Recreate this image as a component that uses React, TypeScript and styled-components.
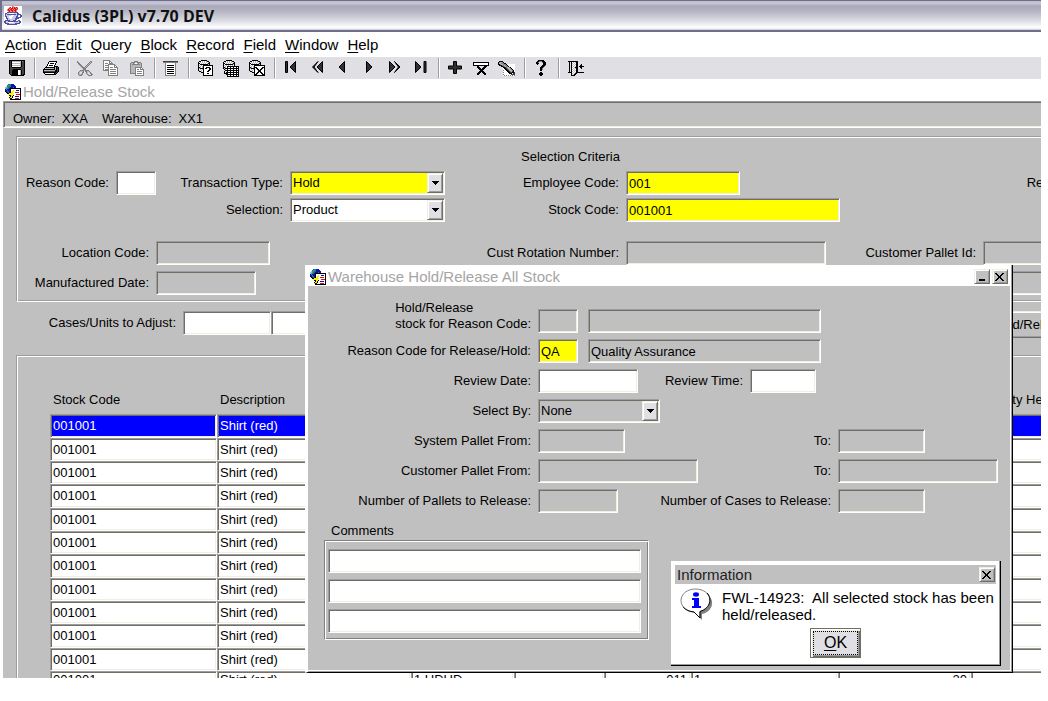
import React from 'react';
import styled, { createGlobalStyle, css } from 'styled-components';

const GREY = '#c0c0c0';
const SHADE = '#9d9da1';
const DARK = '#716f64';
const CREAM = '#f1efe2';
const CHROME = '#dfdfe4';

const inset = css`
  border: 1px solid;
  border-color: ${SHADE} #fff #fff ${SHADE};
  box-shadow: inset 1px 1px ${DARK}, inset -1px -1px ${CREAM};
`;

const raised = css`
  border: 1px solid;
  border-color: ${CREAM} ${DARK} ${DARK} ${CREAM};
  box-shadow: inset 1px 1px #fff, inset -1px -1px ${SHADE};
`;

const GlobalStyle = createGlobalStyle`
  *, *::before, *::after { box-sizing: border-box; }
  body {
    margin: 0;
    background: #fff;
    color: #000;
    font: 13px/16px "Liberation Sans", Arial, sans-serif;
    overflow: hidden;
  }
  button, input, select { font: inherit; color: inherit; margin: 0; border-radius: 0; }
`;

/* ---------- window chrome ---------- */

const Frame = styled.div`
  position: relative;
  display: flex;
  flex-direction: column;
  height: calc(100vh - 23px);
  margin-right: 7px;
  overflow: hidden;
`;

const TitleBar = styled.header`
  flex: none;
  display: flex;
  align-items: center;
  gap: 10px;
  height: 32px;
  padding-left: 2px;
  border: solid #6f6e8c;
  border-width: 1px 0 2px 2px;
  background: linear-gradient(#b9b9d0 0, #c9c9d6 2px, #a9a9ba 5px, #b4b4c2 10px, #dcdce4 20px, #f8f8fa 25px, #ffffff 27px, #c8c8d6 29px);
`;

const AppTitle = styled.h1`
  margin: 0;
  font: bold 16px/20px "Open Sans", "Noto Sans", sans-serif;
  color: #111;
`;

const MenuBar = styled.nav`
  flex: none;
  display: flex;
  gap: 9px;
  height: 25px;
  padding-left: 5px;
`;

const MenuItem = styled.button`
  border: 0;
  padding: 0;
  background: none;
  font-size: 15px;
  line-height: 25px;
  &::first-letter {
    text-decoration: underline;
    text-underline-offset: 2px;
  }
`;

const Toolbar = styled.div`
  flex: none;
  display: flex;
  align-items: center;
  height: 22px;
  padding-left: 4px;
  background: ${CHROME};
`;

const ToolButton = styled.button`
  display: flex;
  align-items: center;
  justify-content: center;
  width: 26px;
  height: 22px;
  border: 0;
  padding: 0;
  background: none;
`;

const Separator = styled.span`
  width: 2px;
  height: 20px;
  margin: 0 2px 0 4px;
  border-left: 1px solid ${SHADE};
  border-right: 1px solid #fff;
`;

const WindowTitle = styled.div`
  flex: none;
  display: flex;
  align-items: center;
  gap: 2px;
  height: 22px;
  padding: 3px 4px 0 5px;
  background: #fff;
  color: #a5a5a5;
  font-size: 15px;
`;

const TitleText = styled.h2`
  flex: 1;
  margin: 0;
  font-size: inherit;
  font-weight: normal;
`;

const CaptionButton = styled.button`
  ${raised}
  display: flex;
  align-items: center;
  justify-content: center;
  width: 16px;
  height: 15px;
  padding: 0;
  background: ${GREY};
`;

/* ---------- form parts ---------- */

const Workspace = styled.main`
  flex: 1 0 auto;
  margin-left: 3px;
  background: ${GREY};
`;

const InfoStrip = styled.div`
  display: flex;
  gap: 14px;
  height: 27px;
  padding: 9px 0 0 9px;
  border: solid;
  border-width: 1px 0 1px 1px;
  border-color: ${SHADE} #fff #fff ${SHADE};
  box-shadow: inset 1px 1px ${DARK}, inset 0 -1px ${CREAM};
`;

const InfoPair = styled.span`
  display: flex;
  gap: 7px;
  line-height: 15px;
`;

const Panel = styled.section`
  margin: 8px -20px 0 13px;
  border: 1px solid ${SHADE};
  border-bottom-color: #fff;
  box-shadow: inset 1px 1px #fff, inset 0 -1px ${SHADE};
`;

const CriteriaPanel = styled(Panel)`
  padding: 12px 0 6px 1px;
`;

const StockPanel = styled(Panel)`
  margin-top: 17px;
  padding: 35px 0 0 33px;
`;

const PanelHeading = styled.h3`
  margin: 0 0 6px;
  padding-left: 503px;
  font-size: 13px;
  font-weight: normal;
`;

const Line = styled.div<{ $after?: number }>`
  display: flex;
  align-items: center;
  gap: 7px;
  height: 24px;
  margin-bottom: ${p => p.$after ?? 0}px;
`;

const Label = styled.label<{ $w?: number }>`
  flex: none;
  width: ${p => (p.$w ? p.$w + 'px' : 'auto')};
  text-align: right;
  white-space: nowrap;
`;

const Spacer = styled.span<{ $w: number }>`
  flex: none;
  width: ${p => p.$w}px;
`;

type Tone = 'white' | 'grey' | 'yellow';
const toneColor = { white: '#fff', grey: GREY, yellow: '#ff0' };

const Field = styled.input<{ $w: number; $tone?: Tone }>`
  ${inset}
  flex: none;
  width: ${p => p.$w}px;
  height: 24px;
  padding: 0 2px;
  background: ${p => toneColor[p.$tone ?? 'white']};
  outline: 0;
`;

const SelectBox = styled.span<{ $w: number; $tone?: Tone }>`
  ${inset}
  position: relative;
  flex: none;
  display: flex;
  width: ${p => p.$w}px;
  height: 24px;
  background: ${p => toneColor[p.$tone ?? 'white']};
`;

const NativeSelect = styled.select`
  appearance: none;
  flex: 1;
  border: 0;
  padding: 0 18px 0 2px;
  background: none;
  outline: 0;
`;

const Arrow = styled.span`
  ${raised}
  position: absolute;
  top: 1px;
  right: 1px;
  bottom: 1px;
  display: flex;
  align-items: center;
  justify-content: center;
  width: 16px;
  background: ${CHROME};
  pointer-events: none;
`;

function Select({ id, w, value, tone }: { id: string; w: number; value: string; tone?: Tone }) {
  return (
    <SelectBox $w={w} $tone={tone}>
      <NativeSelect id={id} defaultValue={value}>
        <option>{value}</option>
      </NativeSelect>
      <Arrow>
        <svg width="7" height="4" shapeRendering="crispEdges">
          <path d="M0 0h7v1h-1v1h-1v1h-1v1h-1v-1h-1v-1h-1v-1h-1z" />
        </svg>
      </Arrow>
    </SelectBox>
  );
}

const AdjustLine = styled(Line)`
  height: 27px;
  align-items: flex-start;
  margin-top: 9px;
  line-height: 24px;
`;

const FieldPair = styled.span`
  display: flex;
`;

const ActionButton = styled.button`
  ${raised}
  flex: none;
  width: 98px;
  height: 27px;
  margin-left: 617px;
  padding: 0;
  background: ${GREY};
`;

/* ---------- stock table ---------- */

const StockTable = styled.table`
  table-layout: fixed;
  width: 1060px;
  border-collapse: separate;
  border-spacing: 0;
`;

const Head = styled.th`
  height: 23px;
  padding: 0 0 5px 3px;
  font-weight: normal;
  text-align: left;
  white-space: nowrap;
`;

const Cell = styled.td<{ $right?: boolean }>`
  ${inset}
  height: 23px;
  padding: 0 3px 0 2px;
  background: #fff;
  text-align: ${p => (p.$right ? 'right' : 'left')};
  white-space: nowrap;
`;

const StockRow = styled.tr<{ $selected?: boolean }>`
  &:nth-child(3n + 1) ${Cell} {
    height: 24px;
  }
  &:last-child ${Cell} {
    vertical-align: top;
  }
  ${p =>
    p.$selected &&
    css`
      ${Cell} {
        background: #00f;
        color: #fff;
      }
    `}
`;

/* ---------- dialogs ---------- */

const ReleaseDialog = styled.section`
  position: absolute;
  left: 305px;
  top: 265px;
  display: flex;
  flex-direction: column;
  width: 708px;
  height: 408px;
  border: solid;
  border-width: 0 1px 1px 3px;
  border-color: #fff #000 #000 #fff;
  background: ${GREY};
  box-shadow: inset -1px -1px ${SHADE}, inset -2px -2px #fff;
`;

const DialogTitle = styled(WindowTitle)`
  height: 21px;
  padding: 2px 3px 0 2px;
  margin-right: 1px;
`;

const DialogForm = styled.form`
  display: flex;
  flex-direction: column;
  gap: 6px;
  padding-top: 23px;
`;

const StackedLabel = styled(Label)`
  display: flex;
  justify-content: flex-end;
  margin-top: -10px;
  text-align: left;
`;

const FieldRun = styled.span<{ $w: number }>`
  flex: none;
  display: flex;
  align-items: center;
  justify-content: space-between;
  width: ${p => p.$w}px;
`;

const Comments = styled.fieldset`
  width: 325px;
  margin: 10px 0 0 16px;
  padding: 0;
  border: 0;
`;

const CommentsLegend = styled.legend`
  padding: 0 0 1px 7px;
`;

const CommentsFrame = styled.div`
  display: flex;
  flex-direction: column;
  gap: 6px;
  height: 100px;
  padding: 8px 0 0 3px;
  border: 1px solid;
  border-color: #808080 #fff #fff #808080;
  box-shadow: inset 1px 1px #fff, inset -1px -1px #808080;
`;

const InfoDialog = styled.section`
  position: absolute;
  left: 671px;
  top: 561px;
  width: 330px;
  height: 105px;
  padding: 4px 4px 0 4px;
  border-right: 1px solid #000;
  border-bottom: 1px solid #000;
  background: #fff;
  box-shadow: inset -1px -1px ${SHADE};
`;

const InfoTitle = styled.div`
  display: flex;
  align-items: center;
  height: 19px;
  padding: 0 1px 0 2px;
  background: ${GREY};
  font-size: 15px;
  color: #222;
`;

const InfoBody = styled.div`
  display: flex;
  gap: 9px;
  padding: 4px 0 0 5px;
`;

const Message = styled.p`
  margin: 1px 0 0;
  font-size: 15px;
  line-height: 17px;
  white-space: pre;
`;

const OkButton = styled.button`
  display: block;
  width: 51px;
  height: 30px;
  margin: 5px auto 0;
  padding: 1px;
  border: 1px solid ${DARK};
  background: ${CHROME};
  box-shadow: inset 1px 1px #fff, inset 2px 2px ${CREAM}, inset -1px -1px ${DARK}, inset -2px -2px ${SHADE};
`;

const OkFace = styled.span`
  display: block;
  margin: 1px;
  border: 1px dotted #000;
  font-size: 16px;
  line-height: 22px;
  &::first-letter {
    text-decoration: underline;
    text-underline-offset: 2px;
  }
`;

/* ---------- icons ---------- */

const INK: Record<string, string> = {
  K: '#000000',
  D: '#404040',
  M: '#808080',
  L: '#b8b8b8',
  W: '#ffffff',
  R: '#e01010',
  B: '#1010b0',
  C: '#3090c0',
  G: '#108050',
  Y: '#f8f000',
  P: '#f08080',
  V: '#5050a0',
  S: '#c8c8e8',
};

function Pixels({ rows }: { rows: string[] }) {
  const used = Math.max(...rows.map(r => r.replace(/\.+$/, '').length));
  const w = used + (used % 2);
  const runs: React.ReactElement[] = [];
  rows.forEach((row, y) => {
    for (const m of row.matchAll(/([A-Z])\1*/g)) {
      runs.push(<rect key={`${m.index}-${y}`} x={m.index} y={y} width={m[0].length} height={1} fill={INK[m[1]]} />);
    }
  });
  return (
    <svg width={w} height={rows.length} shapeRendering="crispEdges" aria-hidden="true">
      {runs}
    </svg>
  );
}

const javaCup = [
  'WWWWWWWWPPWWWWWWWW',
  'WWWWWPRWRPRPRPWWWW',
  'WWWWPRPRRPRRPRWWWW',
  'WWWPRPRRPRPRRPWWWW',
  'WWWPRRPRRPRRPWWWWW',
  'WWWWPRPPRPPRPWWWWW',
  'WWWVVVVVVVVVVVWWWW',
  'WVVSSWWWWWSSSVVWWW',
  'WVSVVVVVVVVVSVVVVW',
  'WVSSSSSWWWSSSVSWVV',
  'WVVSSWWWWSSSVVWWVV',
  'WWVSSWWWSSSSVVVVVW',
  'WWVVSSWWSSSVVVVWWW',
  'WWWVSSSSSSSVVWWWWW',
  'WVVVVVSSSVVVWWVVWW',
  'VVSSVVVVVVVVVVSVVW',
  'VVSSWWWWWWSSSSSVVW',
  'WVVVVSSSSSSVVVVVWW',
  'WWWVVVVVVVVVVWWWWW',
  'WWWWWWWWWWWWWWWWWW',
];

const docIcon = [
  '...GGCBBB.......',
  '..GCCGBBBB......',
  '.LCCGGBBBBB.....',
  'LLCGGBBBGBB.....',
  'LCCGBKKKKKKKKKKK',
  'BCBBBKWWWWWWWWWK',
  'BBGBBKWWYWWBBBWK',
  'KBGGBKWYYWWWWWWK',
  '.KBGBKYYWWRRRRWK',
  '..KKYYYYYWWWWWWK',
  '...YYYYYWWWRRRRK',
  '....KKYYKWWWWWWK',
  '.....KYKWWBBBBWK',
  '....KYYKWWWWWWWK',
  '....YKKWWWRRRRWK',
  '.....KKKKKKKKKKK',
];

const save = [
  'KKKKKKKKKKKKKKKK',
  'KDKLLLLLLLLLKMDK',
  'KDKWWWWWWWWLKDDK',
  'KDKLLLLLLLLLKDDK',
  'KDKWWWWWWWWLKDDK',
  'KDKLLLLLLLLLKDDK',
  'KDKWWWWWWWWLKDDK',
  'KDDKKKKKKKKKDDDK',
  'KDDDDDDDDDDDDDDK',
  'KDDDKKKKKKKKDDDK',
  'KDDKKKKKKWWLKDDK',
  'KDDKKKKKKWWLKDDK',
  'KDDKKKKKKWWLKDDK',
  'KDDKKKKKKWWLKDDK',
  '.KDKKKKKKWWLKDKK',
  '..KKKKKKKKKKKKK.',
];

const print = [
  '......KKKKKKKK..',
  '.....KWWWWWWWK..',
  '.....KWKKKKWK...',
  '....KWWWWWWWK...',
  '....KWKKKKWK....',
  '...KWWWWWWWKKKK.',
  '..KKKKKKKKKKLKDK',
  '.KLLLLLLLLLKLKDK',
  'KKKKKKKKKKKKLKDK',
  'KLLLLLLLLLLLKKDK',
  'KDDDDDDDDDDDKKDK',
  'KKKKKKKKKKKKKDK.',
  '.KWWWWWWWWWKDK..',
  '..KKKKKKKKKKK...',
];

const cut = [
  'M............MM.',
  'MM..........MLM.',
  '.MM........MLM..',
  '.LMM......MLM...',
  '..LMM....MLM....',
  '...LMM..MLM.....',
  '....LMMMLM......',
  '.....LMMM.......',
  '......MMM.......',
  '...MMMMLMMMM....',
  '..MLLLM.MMLLM...',
  '.ML..MM..ML.LM..',
  '.ML..M...ML..MM.',
  '.MLLMM....ML..MM',
  '..MMM......MMMM.',
];

const copy = [
  'MMMMMMM.........',
  'MWWWWWMM........',
  'MWWWWWMWM.......',
  'MWMMMWMMMM......',
  'MWWWWMMMMMMM....',
  'MWMMMMWWWWWMM...',
  'MWWWWMWWWWWMWM..',
  'MWMMMMWMMMWMMMM.',
  'MWWWWMWWWWWWWWM.',
  'MWMMMMWMMMMMMWM.',
  'MMMMMMWWWWWWWWM.',
  '.....MWMMMMMMWM.',
  '.....MWWWWWWWWM.',
  '.....MWMMMMMMWM.',
  '.....MWWWWWWWWM.',
  '.....MMMMMMMMMM.',
];

const paste = [
  '.....MMMM.......',
  '..MMMMLLMMMM....',
  '.MLLMLWWLMLLM...',
  '.MLMMMMMMMMLM...',
  '.MLLLLLLLLLLM...',
  '.MLLLLLLLLLLM...',
  '.MLLLLMMMMMMM...',
  '.MLLLLMWWWWMWM..',
  '.MLLLLMWMMWMMMM.',
  '.MLLLLMWWWWWWWM.',
  '.MLLLLMWMMMMMWM.',
  '.MLLLLMWWWWWWWM.',
  '.MMMMMMWMMMMMWM.',
  '......MWWWWWWWM.',
  '......MMMMMMMMM.',
];

const form = [
  'DDDDDDDDDDDDDDD',
  'MMMMMMMMMMMMMMM',
  '..MWWWWWWWWWM..',
  '..MWWWWWWWWWM..',
  '..MWKKKKKKKWM..',
  '..MWWWWWWWWWM..',
  '..MWKKKKKKKWM..',
  '..MWWWWWWWWWM..',
  '..MWKKKKKKKWM..',
  '..MWWWWWWWWWM..',
  '..MWKKKKKKKWM..',
  '..MWWWWWWWWWM..',
  '..MWKKKKKKKWM..',
  '..MWWWWWWWWWM..',
  '..MMMMMMMMMMM..',
];

const enterQuery = [
  '....KKKKKK.......',
  '..KKWLWLWLKK.....',
  '.KWLWLWLWLWLK....',
  '.KKWLWLWLWLKK....',
  '.KWKKKKKKKKLK....',
  '.KLWLWKKKKKKKKKK.',
  '.KWLWLKWWWWWWWWK.',
  '.KKLWLKWWKKKKWWK.',
  '.KLKKKKWKKWWKKWK.',
  '.KWLWLKWWWWWKKWK.',
  '.KLWLWKWWWWKKWWK.',
  '..KKLWKWWWKKWWWK.',
  '....KKKWWWWWWWWK.',
  '......KWWWKKWWWK.',
  '......KWWWWWWWWK.',
  '......KKKKKKKKKK.',
];

const runQuery = [
  '....KKKKKK.......',
  '..KKWLWLWLKK.....',
  '.KWLWLWLWLWLK....',
  '.KKWLWLWLWLKK....',
  '.KWKKKKKKKKLK....',
  '.KLWLWLWLWLWK....',
  '.KWLWKKKKKKKKKKKK',
  '.KKLWKWWKWWKWWKWK',
  '.KLKKKKKKKKKKKKKK',
  '..KLWKWWKWWKWWKWK',
  '...KKKKKKKKKKKKKK',
  '..K..KWWKWWKWWKWK',
  '..K.KKKKKKKKKKKKK',
  '..KKKKWWKWWKWWKWK',
  '....KKKKKKKKKKKKK',
  '.....KWWKWWKWWKWK',
  '.....KKKKKKKKKKKK',
];

const cancelQuery = [
  '....KKKKKK.......',
  '..KKWLWLWLKK.....',
  '.KWLWLWLWLWLK....',
  '.KKWLWLWLWLKK....',
  '.KWKKKKKKKKLK....',
  '.KLWLWKKKKKKKKKKK',
  '.KWLWLKWWWWWWWWWK',
  '.KKLWLKKKWWWWWKKK',
  '.KLKKKKWKKWWWKKWK',
  '.KWLWLKWWKKWKKWWK',
  '.KLWLWKWWWKKKWWWK',
  '..KKLWKWWWKKKWWWK',
  '....KKKWWKKWKKWWK',
  '......KWKKWWWKKWK',
  '......KKKWWWWWKKK',
  '......KKKKKKKKKKK',
];

const clearRecord = [
  'KKKKKKKKKKKKKKKK',
  'KWWWWWWWWWWWWWWK',
  'KWWWWWWWWWWWWWWK',
  'KKKKKKKKKKKKKKKK',
  '....KK.....KKK..',
  '....KKK...KKK...',
  '.....KKK.KKK....',
  '......KKKKK.....',
  '.......KKK......',
  '......KKKKK.....',
  '.....KKK.KKK....',
  '....KKK...KKK...',
  '....KK.....KK...',
];

const torch = [
  '.KKKK............',
  'KMLLMK...........',
  'KLLMMMKK.........',
  'KKMLLMMMKWWWWWWWW',
  '.KKKMMLMMKWWWWWWW',
  '...KKDMLMMKWWWWWW',
  '.....KKDMLLMKWWWW',
  '.....WKKDMLLMKWWW',
  '.....WWKKDMLLMKWW',
  '.....MWWKKDMLLMKW',
  '.....WWWWKKDMLDKW',
  '.....MWWWWKKDDKKD',
  '.....WWWWWWKKKWDD',
  '.....MWWWWWWWDDDD',
  '.....WMWMWMWMWMWM',
];

const help = [
  '..KKKKKK..',
  '.KKMMMKKK.',
  'KKM...MKKK',
  'KKK....KKK',
  '.K.....KKK',
  '......KKKM',
  '.....KKKM.',
  '....KKKM..',
  '....KKM...',
  '....KKM...',
  '....KK....',
  '..........',
  '....KK....',
  '...KKKK...',
  '...KKKK...',
  '....KK....',
];

const exit = [
  '..KKKKKKKKKK......',
  '...K.KWLWLKK......',
  '...K.KLWLWKK......',
  '...K.KWLWLKK...K..',
  '...K.KLWLWKK..KK..',
  '...K.KWLWLKK.KKKKK',
  '...K.KLWLKKK..KK..',
  '...K.KWLWLKK...K..',
  '...K.KLWLWKK......',
  '...K.KWLWLKK......',
  '...K.KLWLWKK......',
  '..KKKKWLWLKKKKKKKK',
  '.....KLWLKK.......',
  '.....KWLKK........',
  '.....KKKK.........',
];

function Glyph({ w, d }: { w: number; d: string }) {
  return (
    <svg width={w} height="14" viewBox={`0 0 ${w} 14`} aria-hidden="true">
      <path d={d} fill="#303030" stroke="#000" strokeWidth="1" />
    </svg>
  );
}

const tools: ([string, React.ReactElement] | null)[] = [
  ['Save', <Pixels rows={save} />],
  null,
  ['Print', <Pixels rows={print} />],
  null,
  ['Cut', <Pixels rows={cut} />],
  ['Copy', <Pixels rows={copy} />],
  ['Paste', <Pixels rows={paste} />],
  null,
  ['List', <Pixels rows={form} />],
  null,
  ['Enter query', <Pixels rows={enterQuery} />],
  ['Run query', <Pixels rows={runQuery} />],
  ['Cancel query', <Pixels rows={cancelQuery} />],
  null,
  ['First record', <Glyph w={12} d="M.5 .5h2v11h-2z M10.500 .5v11L5 6z" />],
  ['Previous block', <Glyph w={12} d="M11.500 .5v11L6 6z M7 .5L1.500 6 7 11.500 3 6z" />],
  ['Previous record', <Glyph w={12} d="M7.500 .5v11L2 6z" />],
  ['Next record', <Glyph w={8} d="M1.500 .5v11L7 6z" />],
  ['Next block', <Glyph w={12} d="M.5 .5v11L6 6z M5.500 .5L11 6 5.500 11.500 9.500 6z" />],
  ['Last record', <Glyph w={12} d="M.5 .5v11L6 6z M9 .5h2v11h-2z" />],
  null,
  ['Insert record', <Glyph w={14} d="M5.500.5h3v4.500h5v3h-5v4.500h-3v-4.500h-5v-3h5z" />],
  ['Remove record', <Pixels rows={clearRecord} />],
  ['Clear record', <Pixels rows={torch} />],
  null,
  ['Help', <Pixels rows={help} />],
  null,
  ['Exit', <Pixels rows={exit} />],
];

const CloseGlyph = () => (
  <Pixels
    rows={[
      'KK.....KK.',
      '.KK...KK..',
      '..KK.KK...',
      '...KKK....',
      '...KKK....',
      '..KK.KK...',
      '.KK...KK..',
      'KK.....KK.',
    ]}
  />
);

const InfoBalloon = () => (
  <svg width="33" height="33" viewBox="0 0 33 33" aria-hidden="true">
    <path d="M30 9c4 5 2 12-3 15-2 1-4 2-5 2v6l-4-4 2-4z" fill="#808080" />
    <path d="M15.500 1C23.500 1 30 5.800 30 12.500c0 5.500-4 9.500-10 11v6.500L14 24C6.500 23.500 1 18.500 1 12.500 1 5.800 7.500 1 15.500 1z" fill="#fff" stroke="#808080" />
    <path d="M27 5c5 5 4 15-7 18.500v6.500L14 24C9.500 23.600 5.500 22 3.200 19" fill="none" stroke="#000" />
    <ellipse cx="16" cy="6.500" rx="3" ry="2.200" fill="#00f" />
    <path d="M12 10h7v8h2v2h-9v-2h2v-6h-2z" fill="#00f" />
  </svg>
);

/* ---------- screens ---------- */

const menus = ['Action', 'Edit', 'Query', 'Block', 'Record', 'Field', 'Window', 'Help'];
const columns = [167, 194, 103, 90, 87, 147, 133, 139];

type Stock = { id: number; tag?: string; batch?: string; level?: string; qty?: string };
const stock: Stock[] = [
  ...Array.from({ length: 11 }, (_, id) => ({ id })),
  { id: 11, tag: '1 UDUD', batch: '011', level: '1', qty: '20' },
];

function SelectionCriteria() {
  return (
    <CriteriaPanel>
      <PanelHeading>Selection Criteria</PanelHeading>
      <Line $after={3}>
        <Label $w={91} htmlFor="reason">Reason Code:</Label>
        <Field id="reason" $w={40} />
        <Label $w={120} htmlFor="txn">Transaction Type:</Label>
        <Select id="txn" w={155} value="Hold" tone="yellow" />
        <Label $w={167} htmlFor="employee">Employee Code:</Label>
        <Field id="employee" $w={114} $tone="yellow" defaultValue="001" />
        <Label $w={357}>Review Date:</Label>
      </Line>
      <Line $after={19}>
        <Label $w={265} htmlFor="selection">Selection:</Label>
        <Select id="selection" w={155} value="Product" />
        <Label $w={167} htmlFor="stock">Stock Code:</Label>
        <Field id="stock" $w={214} $tone="yellow" defaultValue="001001" />
      </Line>
      <Line $after={6}>
        <Label $w={131} htmlFor="location">Location Code:</Label>
        <Field id="location" $w={114} $tone="grey" readOnly />
        <Label $w={342} htmlFor="rotation">Cust Rotation Number:</Label>
        <Field id="rotation" $w={200} $tone="grey" readOnly />
        <Label $w={143} htmlFor="pallet">Customer Pallet Id:</Label>
        <Field id="pallet" $w={114} $tone="grey" readOnly />
      </Line>
      <Line>
        <Label $w={131} htmlFor="made">Manufactured Date:</Label>
        <Field id="made" $w={100} $tone="grey" readOnly />
        <Spacer $w={713} />
        <Field aria-label="Pallet" $w={114} $tone="grey" readOnly />
      </Line>
    </CriteriaPanel>
  );
}

function StockList() {
  return (
    <StockPanel>
      <StockTable>
        <colgroup>
          {columns.map((w, i) => (
            <col key={i} width={w} />
          ))}
        </colgroup>
        <thead>
          <tr>
            <Head>Stock Code</Head>
            <Head>Description</Head>
            <Head colSpan={5} />
            <Head>Quantity Held</Head>
          </tr>
        </thead>
        <tbody>
          {stock.map(s => (
            <StockRow key={s.id} $selected={s.id === 0}>
              <Cell>001001</Cell>
              <Cell>Shirt (red)</Cell>
              <Cell>{s.tag}</Cell>
              <Cell />
              <Cell $right>{s.batch}</Cell>
              <Cell>{s.level}</Cell>
              <Cell $right>{s.qty}</Cell>
              <Cell />
            </StockRow>
          ))}
        </tbody>
      </StockTable>
    </StockPanel>
  );
}

function HoldReleaseDialog() {
  return (
    <ReleaseDialog role="dialog" aria-label="Warehouse Hold/Release All Stock">
      <DialogTitle>
        <Pixels rows={docIcon} />
        <TitleText>Warehouse Hold/Release All Stock</TitleText>
        <CaptionButton aria-label="Minimize">
          <svg width="8" height="8" shapeRendering="crispEdges"><path d="M1 6h6v2h-6z" /></svg>
        </CaptionButton>
        <CaptionButton aria-label="Close"><CloseGlyph /></CaptionButton>
      </DialogTitle>
      <DialogForm onSubmit={e => e.preventDefault()}>
        <Line>
          <StackedLabel $w={223} htmlFor="fromReason">
            <span>Hold/Release<br />stock for Reason Code:</span>
          </StackedLabel>
          <FieldRun $w={283}>
            <Field id="fromReason" $w={40} $tone="grey" readOnly />
            <Field aria-label="From reason description" $w={233} $tone="grey" readOnly />
          </FieldRun>
        </Line>
        <Line>
          <Label $w={223} htmlFor="toReason">Reason Code for Release/Hold:</Label>
          <FieldRun $w={283}>
            <Field id="toReason" $w={40} $tone="yellow" defaultValue="QA" />
            <Field aria-label="Reason description" $w={233} $tone="grey" defaultValue="Quality Assurance" readOnly />
          </FieldRun>
        </Line>
        <Line>
          <Label $w={223} htmlFor="reviewDate">Review Date:</Label>
          <FieldRun $w={205}>
            <Field id="reviewDate" $w={100} />
            <Label htmlFor="reviewTime">Review Time:</Label>
          </FieldRun>
          <Field id="reviewTime" $w={66} />
        </Line>
        <Line>
          <Label $w={223} htmlFor="selectBy">Select By:</Label>
          <Select id="selectBy" w={122} value="None" tone="grey" />
        </Line>
        <Line>
          <Label $w={223} htmlFor="sysFrom">System Pallet From:</Label>
          <FieldRun $w={293}>
            <Field id="sysFrom" $w={87} $tone="grey" readOnly />
            <Label htmlFor="sysTo">To:</Label>
          </FieldRun>
          <Field id="sysTo" $w={87} $tone="grey" readOnly />
        </Line>
        <Line>
          <Label $w={223} htmlFor="custFrom">Customer Pallet From:</Label>
          <FieldRun $w={293}>
            <Field id="custFrom" $w={160} $tone="grey" readOnly />
            <Label htmlFor="custTo">To:</Label>
          </FieldRun>
          <Field id="custTo" $w={160} $tone="grey" readOnly />
        </Line>
        <Line>
          <Label $w={223} htmlFor="pallets">Number of Pallets to Release:</Label>
          <FieldRun $w={293}>
            <Field id="pallets" $w={80} $tone="grey" readOnly />
            <Label htmlFor="cases">Number of Cases to Release:</Label>
          </FieldRun>
          <Field id="cases" $w={87} $tone="grey" readOnly />
        </Line>
      </DialogForm>
      <Comments>
        <CommentsLegend>Comments</CommentsLegend>
        <CommentsFrame>
          <Field aria-label="Comment line 1" $w={313} />
          <Field aria-label="Comment line 2" $w={313} />
          <Field aria-label="Comment line 3" $w={313} />
        </CommentsFrame>
      </Comments>
    </ReleaseDialog>
  );
}

export default function App() {
  return (
    <Frame>
      <GlobalStyle />
      <TitleBar>
        <Pixels rows={javaCup} />
        <AppTitle>Calidus (3PL) v7.70 DEV</AppTitle>
      </TitleBar>
      <MenuBar>
        {menus.map(m => (
          <MenuItem key={m}>{m}</MenuItem>
        ))}
      </MenuBar>
      <Toolbar>
        {tools.map((t, i) =>
          t ? (
            <ToolButton key={i} aria-label={t[0]}>{t[1]}</ToolButton>
          ) : (
            <Separator key={i} />
          ),
        )}
      </Toolbar>
      <WindowTitle>
        <Pixels rows={docIcon} />
        <TitleText>Hold/Release Stock</TitleText>
      </WindowTitle>
      <Workspace>
        <InfoStrip>
          <InfoPair><span>Owner:</span><span>XXA</span></InfoPair>
          <InfoPair><span>Warehouse:</span><span>XX1</span></InfoPair>
        </InfoStrip>
        <SelectionCriteria />
        <AdjustLine>
          <Label $w={173} htmlFor="cases-adjust">Cases/Units to Adjust:</Label>
          <FieldPair>
            <Field id="cases-adjust" $w={88} />
            <Field aria-label="Units to adjust" $w={88} />
          </FieldPair>
          <ActionButton>Hold/Release</ActionButton>
        </AdjustLine>
        <StockList />
      </Workspace>
      <HoldReleaseDialog />
      <InfoDialog role="alertdialog" aria-label="Information">
        <InfoTitle>
          <TitleText>Information</TitleText>
          <CaptionButton aria-label="Close"><CloseGlyph /></CaptionButton>
        </InfoTitle>
        <InfoBody>
          <InfoBalloon />
          <Message>{'FWL-14923:  All selected stock has been\nheld/released.'}</Message>
        </InfoBody>
        <OkButton><OkFace>OK</OkFace></OkButton>
      </InfoDialog>
    </Frame>
  );
}
